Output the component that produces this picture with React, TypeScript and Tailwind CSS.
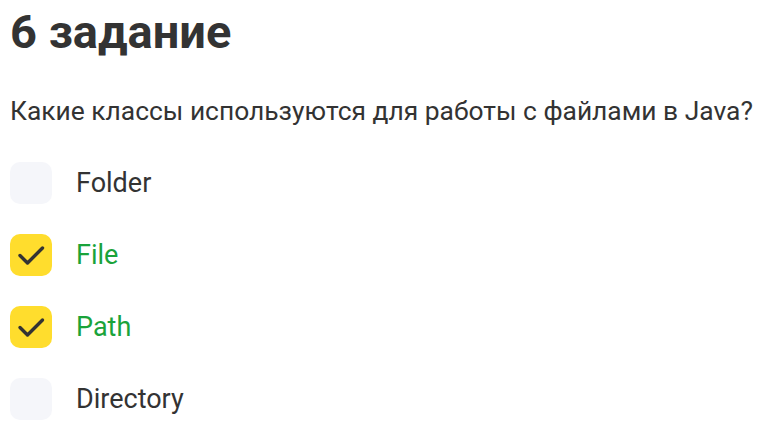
import React from 'react';

const options = [
  { label: 'Folder', checked: false },
  { label: 'File', checked: true },
  { label: 'Path', checked: true },
  { label: 'Directory', checked: false },
];

function Check() {
  return (
    <svg width="42" height="42" viewBox="0 0 42 42" fill="none">
      <path d="M10 21.5l7.5 7.5L32.5 14" stroke="#333333" strokeWidth="3.4" strokeLinecap="round" strokeLinejoin="round" />
    </svg>
  );
}

export default function App() {
  return (
    <div className="w-[763px] h-[442px] bg-white px-[10px] pt-[4px] text-[#333333] font-['Roboto',sans-serif]">
      <h1 className="text-[47px] font-bold leading-[56px]">6 задание</h1>
      <p className="mt-[36px] text-[26.4px] leading-[30px]">Какие классы используются для работы с файлами в Java?</p>
      <div className="mt-[36px] flex flex-col gap-[30px]">
        {options.map(o => (
          <div key={o.label} className="flex items-center gap-[24px]">
            <div className={`w-[42px] h-[42px] rounded-[10px] ${o.checked ? 'bg-[#ffdd2d]' : 'bg-[#f5f6fa]'}`}>
              {o.checked && <Check />}
            </div>
            <span className={`text-[27px] leading-[30px] ${o.checked ? 'text-[#1aa33a]' : ''}`}>{o.label}</span>
          </div>
        ))}
      </div>
    </div>
  );
}
